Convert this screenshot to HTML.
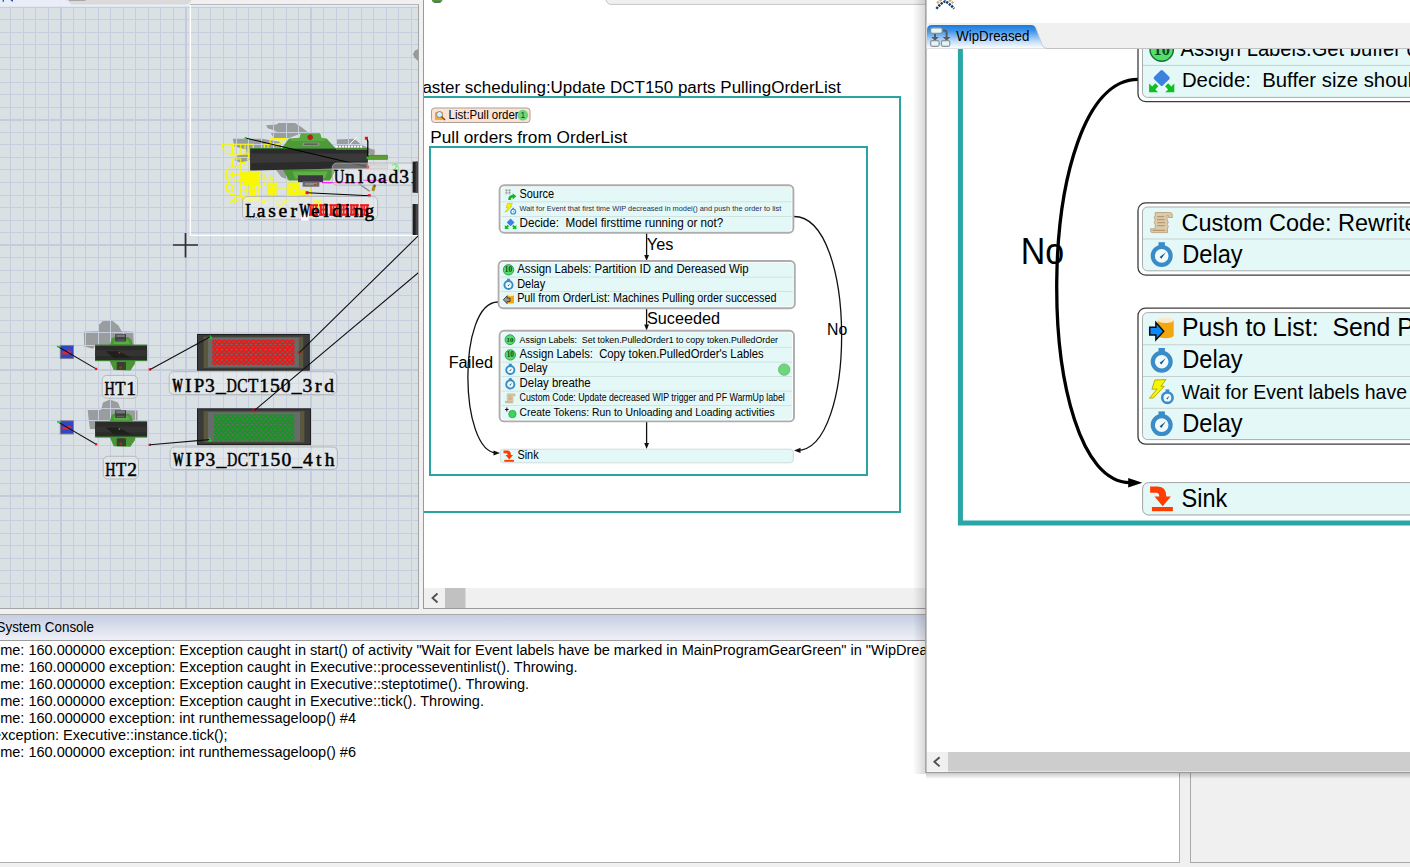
<!DOCTYPE html>
<html lang="en">
<head>
<meta charset="utf-8">
<title>FlexSim - Process Flow</title>
<style>
html,body{margin:0;padding:0;}
body{width:1410px;height:867px;position:relative;overflow:hidden;background:#f0f0f0;font-family:"Liberation Sans",sans-serif;}
svg{position:absolute;left:0;top:0;display:block;}
text{font-family:"Liberation Sans",sans-serif;fill:#000;white-space:pre;}
.lbl{font-family:"Liberation Serif",serif;font-size:19.5px;fill:#000;stroke:#000;stroke-width:0.5px;}
.t12{font-size:12px;}
.t15{font-size:16px;}
.con{font-size:15px;}
</style>
</head>
<body>
<svg width="1410" height="867" viewBox="0 0 1410 867">
<defs>
  <linearGradient id="tabG" x1="0" y1="0" x2="0" y2="1">
    <stop offset="0" stop-color="#1a7bdc"/><stop offset="0.25" stop-color="#3d93e6"/><stop offset="0.7" stop-color="#c3defa"/><stop offset="1" stop-color="#ffffff"/>
  </linearGradient>
  <linearGradient id="conG" x1="0" y1="0" x2="0" y2="1">
    <stop offset="0" stop-color="#c6cee4"/><stop offset="0.45" stop-color="#d9deec"/><stop offset="1" stop-color="#eef0f6"/>
  </linearGradient>
  <linearGradient id="shL" x1="0" y1="0" x2="1" y2="0">
    <stop offset="0" stop-color="#000" stop-opacity="0"/><stop offset="1" stop-color="#000" stop-opacity="0.16"/>
  </linearGradient>
  <linearGradient id="shB" x1="0" y1="0" x2="0" y2="1">
    <stop offset="0" stop-color="#000" stop-opacity="0.25"/><stop offset="1" stop-color="#000" stop-opacity="0"/>
  </linearGradient>
  <clipPath id="clip3d"><rect x="0" y="5" width="418" height="603"/></clipPath>
  <clipPath id="clipMid"><rect x="424" y="5" width="502" height="603"/></clipPath>
  <clipPath id="clipRW"><rect x="927" y="49" width="483" height="703"/></clipPath>
  <clipPath id="clipCon"><rect x="0" y="641" width="1179" height="221"/></clipPath>
  <!-- ===== icon symbols (24 unit box) ===== -->
  <symbol id="icoDelay" viewBox="0 0 24 24" overflow="visible">
    <rect x="8.8" y="-0.6" width="6.4" height="5" fill="#3a8cc9"/>
    <circle cx="12" cy="13.1" r="8.9" fill="#eefafb" stroke="#3a8cc9" stroke-width="4.2"/>
    <path d="M10,14.2 L16,9.6 L11.6,16z" fill="#1d507a"/>
  </symbol>
  <symbol id="icoAssign" viewBox="0 0 24 24" overflow="visible">
    <circle cx="12" cy="12" r="11.4" fill="#52dd6f" stroke="#156f2b" stroke-width="1.4"/>
    <text x="12" y="17.6" text-anchor="middle" font-size="16" font-weight="bold" style="font-family:'Liberation Serif',serif;fill:#0c4a1c">10</text>
  </symbol>
  <symbol id="icoDecide" viewBox="0 0 24 24" overflow="visible">
    <rect x="5.9" y="3.1" width="12.2" height="12.2" rx="1.6" ry="1.6" fill="#3b82e0" transform="rotate(45 12 9.2)"/>
    <path d="M-0.6,14.6 V23.4 H8.4 L5.6,20.6 L8.6,17.4 L5.6,14.4 L2.4,17.6z" fill="#0fbf1f"/>
    <path d="M24.6,14.6 V23.4 H15.6 L18.4,20.6 L15.4,17.4 L18.4,14.4 L21.6,17.6z" fill="#0fbf1f"/>
  </symbol>
  <symbol id="icoCode" viewBox="0 0 24 24" overflow="visible">
    <path d="M5.5,1.5 H20 Q22.6,1.5 22.6,4 V6.5 H18.8 V4.5 H17.4 V9 Q19.6,11 17.6,13.4 Q19.4,15.6 17.8,17.6 V21.6 H2.6 Q1,21.6 1,19.8 V17.8 H5.6 V13.6 Q3.6,11.4 5.6,9.2 Q3.6,6.6 5.5,4.4z" fill="#dccaa9" stroke="#b9a27f" stroke-width="0.9"/>
    <path d="M7.6,5.6 H14.6 M7.4,8.6 H15 M7.6,11.6 H15.4 M7.6,14.6 H15.2 M3,19.4 H15.6" stroke="#b39a74" stroke-width="1.1" fill="none"/>
  </symbol>
  <symbol id="icoPush" viewBox="0 0 24 24" overflow="visible">
    <path d="M8,3.4 V18.6 A8,2.7 0 0 0 24,18.6 V3.4z" fill="#f2a710"/>
    <ellipse cx="16" cy="3.4" rx="8" ry="2.7" fill="#fde8c6"/>
    <path d="M0,10.4 H6.2 V5.6 L14,14.3 L6.2,23 V18.2 H0z" fill="#0a8af8" stroke="#0b0b0b" stroke-width="1.5" stroke-linejoin="miter"/>
  </symbol>
  <symbol id="icoPull" viewBox="0 0 24 24" overflow="visible">
    <path d="M9.5,3.4 V19.4 A7.2,2.6 0 0 0 24,19.4 V3.4z" fill="#f2a710"/>
    <ellipse cx="16.7" cy="3.4" rx="7.2" ry="2.6" fill="#fde8c6"/>
    <path d="M15.4,10 H9 V5 L0.6,13.6 L9,22.2 V17.4 H15.4z" fill="#9a9a9a" stroke="#2a2a2a" stroke-width="1.7"/>
  </symbol>
  <symbol id="icoWait" viewBox="0 0 24 24" overflow="visible">
    <path d="M5.2,-0.4 L16.2,-0.8 L11.2,6 L14.6,5.8 L3.6,17.6 L-0.2,17.8 L7.4,8.6 L2.2,8.8z" fill="#f6f600" stroke="#b4ae0a" stroke-width="1"/>
    <rect x="15.8" y="9" width="3.8" height="3" fill="#3a8cc9"/>
    <circle cx="17.7" cy="17.3" r="5.2" fill="#eefafb" stroke="#3a8cc9" stroke-width="2.6"/>
    <path d="M16.6,18.2 L20,15.4 L17.6,19z" fill="#1d507a"/>
  </symbol>
  <symbol id="icoSink" viewBox="0 0 24 24" overflow="visible">
    <path d="M0.4,-0.4 H8 Q16.6,-0.4 16.6,9.6 H21.2 L13,19.4 L4.8,9.6 H9.6 Q9.6,6 6.4,6 H0.4z" fill="#ff3c00"/>
    <rect x="2.2" y="20.2" width="21" height="4.2" fill="#ff3c00"/>
  </symbol>
  <symbol id="icoSource" viewBox="0 0 24 24" overflow="visible">
    <path d="M0,3 H13 M0,8.6 H13 M2.6,0.6 V12.2 M9.4,0.6 V12.2" stroke="#9a9a9a" stroke-width="1.7" fill="none"/>
    <path d="M6.6,24 Q6.6,13.4 16.4,13.4 V9.4 L24.6,16.2 L16.4,23 V19 Q12.6,19 12.4,24z" fill="#14b52a"/>
  </symbol>
  <symbol id="icoCreate" viewBox="0 0 24 24" overflow="visible">
    <circle cx="16.6" cy="14.4" r="8.2" fill="#3ed45c" stroke="#1a8a34" stroke-width="1.2"/>
    <path d="M0.4,4.4 H8.4 M4.4,0 V8.8" stroke="#111" stroke-width="2.2" fill="none"/>
  </symbol>
  <pattern id="dotR" x="212.2" y="339.7" width="4.85" height="5.1" patternUnits="userSpaceOnUse">
    <circle cx="2.42" cy="2.3" r="1.75" fill="none" stroke="#ff0a0a" stroke-width="1.35"/>
    <rect x="1.8" y="4" width="1.3" height="1.2" fill="#ff0a0a"/>
  </pattern>
  <pattern id="dotG" x="214" y="414.2" width="4.73" height="5.3" patternUnits="userSpaceOnUse">
    <circle cx="2.36" cy="2.4" r="1.75" fill="none" stroke="#0a9a18" stroke-width="1.35"/>
    <rect x="1.7" y="4.2" width="1.3" height="1.2" fill="#0a9a18"/>
  </pattern>
</defs>

<!-- ===== base ===== -->
<rect x="0" y="0" width="1410" height="867" fill="#f0f0f0"/>

<!-- ===== 3D view ===== -->
<g id="view3d">
  <rect x="0" y="4" width="419" height="605" fill="#a3a3a3"/>
  <rect x="0" y="5" width="418" height="603" fill="#dae1e4"/>
  <g id="shadows3d" fill="#999d9d" clip-path="url(#clip3d)">
      <path d="M266.1,125.2 L276.8,124.4 L278.3,122.9 L295,122.9 L301,126.7 L308.6,132.8 L301,133.5 L288.9,138.1 L273.7,138.1 L270.7,132.8 L276.8,131.2 L267.7,128.2z"/>
      <path d="M232.8,138.8 L262,138.8 L281,142 L281,149 L253.2,149.5 L251,160 L240.3,162.4 L234.3,160 L237.3,155.5 L246.4,154 L246.4,149.5 L234.3,146.4z"/>
      <path d="M336,139.6 L354.2,138.8 L361.7,144.9 L374.6,150.2 L374.6,153.2 L367.8,154 L336,148z"/>
      <path d="M276,170 L287,170 L290,180.5 L281.3,177z"/>
    <path d="M83.8,331.7 L98,331.2 L99,324.8 L102.9,320.9 L112.7,320.9 L118.6,325.8 L121.6,331.2 L133.3,331.7 L133.8,344.9 L95.1,345.4 L93.1,348.8 L84.3,346.4z"/>
    <path d="M87.7,410 L101,410 L103,402.6 L110,399.6 L118,402.6 L121,410 L137.5,410.6 L137.5,423 L133,429 L90,429 L88.6,419z"/>
  </g>
  <path d="M10.5,5V608M23.5,5V608M35.5,5V608M48.5,5V608M73.5,5V608M85.5,5V608M98.5,5V608M110.5,5V608M123.5,5V608M135.5,5V608M148.5,5V608M160.5,5V608M173.5,5V608M198.5,5V608M210.5,5V608M223.5,5V608M236.5,5V608M248.5,5V608M261.5,5V608M273.5,5V608M286.5,5V608M298.5,5V608M323.5,5V608M336.5,5V608M348.5,5V608M361.5,5V608M373.5,5V608M386.5,5V608M398.5,5V608M411.5,5V608M0,7.5H418M0,19.5H418M0,32.5H418M0,44.5H418M0,57.5H418M0,69.5H418M0,82.5H418M0,94.5H418M0,107.5H418M0,132.5H418M0,144.5H418M0,157.5H418M0,169.5H418M0,182.5H418M0,195.5H418M0,207.5H418M0,220.5H418M0,232.5H418M0,257.5H418M0,270.5H418M0,282.5H418M0,295.5H418M0,307.5H418M0,320.5H418M0,332.5H418M0,345.5H418M0,357.5H418M0,383.5H418M0,395.5H418M0,408.5H418M0,420.5H418M0,433.5H418M0,445.5H418M0,458.5H418M0,470.5H418M0,483.5H418M0,508.5H418M0,520.5H418M0,533.5H418M0,545.5H418M0,558.5H418M0,570.5H418M0,583.5H418M0,596.5H418" stroke="#c6cdde" stroke-width="1" fill="none" shape-rendering="crispEdges"/>
  <path d="M61,5V608M186,5V608M311,5V608M0,120H418M0,245H418M0,370H418M0,496H418" stroke="#c4cbdc" stroke-width="2" fill="none" shape-rendering="crispEdges"/>
  <rect x="0" y="0" width="418" height="6.6" fill="#e8edf8"/>
  <rect x="190" y="0" width="229" height="4" fill="#f0f0f0"/>
  <rect x="190" y="4" width="229" height="0.9" fill="#b3b3b3"/>
  <path d="M65,0 Q68.4,0.4 69.4,2.6 Q70.4,4.4 73.6,4.4 H186 Q189,4.4 190.4,2 L191.6,0z" fill="#dadada"/>
  <rect x="69" y="0" width="16.5" height="0.9" fill="#a2a2a2"/>
  <rect x="2.6" y="0" width="1.4" height="1.8" fill="#2a5fc0"/>
  <path d="M10.4,0 h2.6 v1.8 q-1.6,-0.2 -2.6,-1.8z" fill="#2a5fc0"/>
</g>

<!-- ===== 3D view objects ===== -->
<g id="objs3d" clip-path="url(#clip3d)">
  <path d="M190.4,5 V235.3 H418" stroke="#ffffff" stroke-width="1.3" fill="none"/>
  <path d="M173,245 H198 M185.5,233 V257.5" stroke="#2f2f2f" stroke-width="1.7" fill="none"/>
  <path d="M418.5,48.8 L415,50.6 L413,54 L414.4,57.4 L418.5,61.4z" fill="#959a9a"/>

  <!-- connection lines to WIP racks -->

  <!-- ===== laser welding machine ===== -->
  <g id="laser">
    <!-- yellow wireframe -->
    <g fill="none" stroke="#f8f800" stroke-width="1.05">
      <path d="M222.1,144.2 H232.5 V154.1 H229.2 L222.7,148.1z"/>
      <rect x="232.5" y="144.2" width="20.8" height="9.9"/>
      <path d="M235.3,144.2 V154.1 M240.7,144.2 V154.1 M245.1,144.2 V154.1 M247.9,144.2 V154.1"/>
      <path d="M270,141.4 Q270,138.4 273,138.4 H286 L279,144 H273 Q270,144 270,141.4z M277,138.4 L283,144"/>
      <path d="M264.3,148 V145.6 Q264.3,144.2 266,144.2 H279.6 M268,144.2 V148"/>
      <path d="M250.1,148.6 V171.6 M247,152 Q250,156 247,160 M247.6,161 H250.1 V166 H247.6z"/>
      <rect x="232.5" y="159" width="8.2" height="8.2"/>
      <path d="M240.7,162.4 H245 M243,165 H245.6"/>
      <path d="M229,167.2 L225.4,171.4 V178 L230.2,181.5 L225.4,184.8 L230.2,194.6 H234.6"/>
      <path d="M229,167.2 H240.7 V195.7 M233.6,171.4 V194.6 M229,174.8 H240.7 M229,185.4 H240.7 M233.6,180 H240.7"/>
      <circle cx="229.6" cy="174.6" r="3.4"/>
      <circle cx="229.6" cy="188.2" r="3.4"/>
      <path d="M258.8,172.7 Q265.6,173 265.6,180 Q265.4,186 259,186.6"/>
      <path d="M240.7,172.2 H258.8 V195.7 H240.7 M246,172.2 V195.7 M252,184 V195.7 M240.7,184 H258.8 M240.7,190 H258.8"/>
      <path d="M271.4,172.7 V183 M269.6,178.2 l1.8,-1.8 l1.8,1.8 l-1.8,1.8z"/>
      <rect x="267.4" y="183.1" width="9.5" height="11"/>
      <path d="M269.4,194 L271.4,197 L273.4,194"/>
      <rect x="287.3" y="182" width="11" height="13.7"/>
      <path d="M298.3,190.8 H305.9 V194.1 H298.3"/>
      <path d="M305.9,187 H309 Q312.4,192 309,198 H305.9"/>
      <path d="M230.3,201.2 H305.9"/>
      <path d="M230.3,203.4 L235.8,196.8 H242.4 L241.3,203.4z M234,203.4 L237.4,198.6"/>
      <path d="M247.6,197.4 L250.4,201.8 L253.6,197.4 M276.4,201.4 L280,207.6 L284.6,201.4"/>
      <circle cx="263.6" cy="201.2" r="1.5"/><circle cx="285" cy="201.2" r="1.5"/>
      <path d="M258.8,178 H267.4 M276.9,189 H287.3"/>
    </g>
    <g fill="#f8f800">
      <path d="M243,172.4 H258.6 V185 H255 V195.4 H250 V185 H243z"/>
      <rect x="241" y="174" width="3" height="8"/>
      <rect x="268.2" y="184" width="7.9" height="9.2"/>
      <rect x="288.2" y="183" width="9.2" height="11.8"/>
      <rect x="298.3" y="191.4" width="7" height="2.2"/>
      <rect x="313.8" y="199.2" width="7.2" height="9.4" opacity="0.85"/>
    </g>
    <g fill="#dae1e4">
      <rect x="270" y="186.4" width="1.6" height="1.6"/><rect x="273" y="186.4" width="1.6" height="1.6"/>
      <rect x="290.4" y="186" width="1.8" height="2"/><rect x="294" y="189.6" width="1.8" height="2"/>
      <rect x="252.6" y="187" width="1.6" height="2.4"/>
    </g>
    <rect x="243.5" y="195.9" width="16.4" height="5" fill="#f4f46a" opacity="0.75"/>
    <!-- green body -->
    <path d="M281.3,148.7 L288.9,138.8 L299.5,138.1 L301,133.5 L320,133.5 L321.5,138.1 L326.8,138.8 L336,148.7z" fill="#4e9a38"/>
    <path d="M288.9,138.8 L299.5,138.1 L301,133.5 L320,133.5 L321.5,138.1 L326.8,138.8 L324,141 H292z" fill="#5aaa42"/>
    <path d="M282.8,169.2 L288.9,180.6 L329.9,180.6 L336,169.2z" fill="#4b9536"/>
    <path d="M292.6,171.4 H327.6 L325,178.4 H295z" fill="#5fae46"/>
    <circle cx="310.2" cy="137.3" r="2.7" fill="#b3231f"/>
    <rect x="302.6" y="142.6" width="16.7" height="3.2" fill="#8f9492"/>
    <rect x="304.2" y="143.4" width="13.4" height="1.6" fill="#5d605f"/>
    <!-- conveyor -->
    <path d="M250.1,148.6 H367.8 V168.6 L330,168.8 L250.1,170.6z" fill="#2b2b2b"/>
    <path d="M250.1,153.5 H367.8 V161 L250.1,163z" fill="#393939"/>
    <path d="M250.1,148.6 H336" stroke="#2f7a2f" stroke-width="0.9" fill="none"/>
    <rect x="336" y="148.2" width="32" height="1.6" fill="#4a9436"/>
    <!-- bottom dark box -->
    <rect x="298" y="175.3" width="25" height="6.8" fill="#37373d"/>
    <rect x="302.6" y="181.3" width="16.7" height="5.4" fill="#6a6a70"/>
    <rect x="305" y="183" width="12" height="2.2" fill="#8d8d92"/>
    <rect x="314" y="184" width="2.4" height="1.4" fill="#c0392b"/>
    <!-- rods -->
    <rect x="369.7" y="149.5" width="4.8" height="6" fill="#9c9c9c"/>
    <rect x="372" y="168.8" width="13" height="2" fill="#d6d6d6"/>
    <rect x="367.8" y="155.2" width="19.7" height="4.1" fill="#5c9c32" stroke="#3f7422" stroke-width="0.6"/>
    <rect x="367.8" y="164.9" width="19.7" height="4" fill="#cfcfcf" stroke="#a5a5a5" stroke-width="0.6"/>
    <!-- white ticks -->
    <path d="M349.6,144.6 L356.6,137.2" stroke="#ffffff" stroke-width="1"/>
    <path d="M336,146.6 H362" stroke="#ffffff" stroke-width="1.6" stroke-dasharray="2 1"/>
    <!-- connector lines -->
    <path d="M245.7,138.1 L367.8,166.9" stroke="#000" stroke-width="1"/>
    <path d="M367.8,157.8 V141 L366.6,138.4" stroke="#000" stroke-width="1.2" fill="none"/>
    <rect x="244.6" y="137" width="2.2" height="2.2" fill="#22cc22"/>
    <rect x="364.8" y="136.8" width="3.2" height="2.8" fill="#ee1111"/>
    <rect x="366.4" y="165.6" width="2.8" height="2.8" fill="#ee1111"/>
    <rect x="366.6" y="156.6" width="2.2" height="2.2" fill="#22cc22"/>
    <path d="M392,165.4 q3.6,-3 5.8,0.6 q2,4 -1.6,6.2 M394.4,164 l2.4,3 l-3.4,2.6 l4,1.4 M395.6,163.4 v3" stroke="#22e022" stroke-width="1.1" fill="none" stroke-dasharray="1.6 0.9"/>
    <!-- magenta line -->
    <path d="M322,182.6 H363 M363,180.4 H387.6" stroke="#ff1cff" stroke-width="1.1" fill="none"/>
    <path d="M358.5,183.4 L369.7,191.3" stroke="#8d8d8d" stroke-width="1.3"/>
    <path d="M373,184.8 l3,1 l-1.6,5.4 l-3,-0.6z" fill="#a58a1e"/><circle cx="374.6" cy="185.4" r="1.1" fill="#3a2a12"/>
    <path d="M307.1,192.7 L369.3,195.7" stroke="#000" stroke-width="1.1"/>
    <rect x="305.6" y="191.2" width="3" height="3" fill="#ee1111"/>
    <rect x="367.8" y="194.2" width="3" height="3" fill="#ee1111"/>
    <rect x="332.2" y="163.1" width="95" height="22" rx="4.5" fill="#f4f4f4" fill-opacity="0.34" stroke="#a9acad" stroke-opacity="0.85" stroke-width="0.9"/>
    <rect x="242.6" y="196.5" width="135.1" height="22.8" rx="4.5" fill="#f4f4f4" fill-opacity="0.34" stroke="#a9acad" stroke-opacity="0.85" stroke-width="0.9"/>
    <!-- red garble under label -->
    <g fill="#ee1c1c">
      <rect x="309.5" y="204.5" width="2.2" height="11"/>
      <rect x="315.2" y="204.5" width="2.2" height="11"/>
      <rect x="309.0" y="204.2" width="9" height="2"/>
      <rect x="310.0" y="208.6" width="7.5" height="1.8"/>
      <rect x="309.0" y="213.6" width="9" height="2.2"/>
      <rect x="312.4" y="206.0" width="1.6" height="8"/>
      <rect x="319.7" y="204.5" width="2.2" height="11"/>
      <rect x="325.4" y="204.5" width="2.2" height="11"/>
      <rect x="319.2" y="204.2" width="9" height="2"/>
      <rect x="320.2" y="208.6" width="7.5" height="1.8"/>
      <rect x="319.2" y="213.6" width="9" height="2.2"/>
      <rect x="322.6" y="206.0" width="1.6" height="8"/>
      <rect x="329.9" y="204.5" width="2.2" height="11"/>
      <rect x="335.6" y="204.5" width="2.2" height="11"/>
      <rect x="329.4" y="204.2" width="9" height="2"/>
      <rect x="330.4" y="208.6" width="7.5" height="1.8"/>
      <rect x="329.4" y="213.6" width="9" height="2.2"/>
      <rect x="332.8" y="206.0" width="1.6" height="8"/>
      <rect x="340.1" y="204.5" width="2.2" height="11"/>
      <rect x="345.8" y="204.5" width="2.2" height="11"/>
      <rect x="339.6" y="204.2" width="9" height="2"/>
      <rect x="340.6" y="208.6" width="7.5" height="1.8"/>
      <rect x="339.6" y="213.6" width="9" height="2.2"/>
      <rect x="343.0" y="206.0" width="1.6" height="8"/>
      <rect x="350.3" y="204.5" width="2.2" height="11"/>
      <rect x="356.0" y="204.5" width="2.2" height="11"/>
      <rect x="349.8" y="204.2" width="9" height="2"/>
      <rect x="350.8" y="208.6" width="7.5" height="1.8"/>
      <rect x="349.8" y="213.6" width="9" height="2.2"/>
      <rect x="353.2" y="206.0" width="1.6" height="8"/>
      <rect x="360.5" y="204.5" width="2.2" height="11"/>
      <rect x="366.2" y="204.5" width="2.2" height="11"/>
      <rect x="360.0" y="204.2" width="9" height="2"/>
      <rect x="361.0" y="208.6" width="7.5" height="1.8"/>
      <rect x="360.0" y="213.6" width="9" height="2.2"/>
      <rect x="363.4" y="206.0" width="1.6" height="8"/>
    </g>
    <rect x="301" y="207" width="7.6" height="13.6" fill="#ffffff"/>
    <path d="M249.5,217.6 H260" stroke="#22cc22" stroke-width="1" stroke-dasharray="1.5 1.5"/>
    <!-- label plates -->
    <text class="lbl" y="182.8"><tspan x="334.0" textLength="10.3" lengthAdjust="spacingAndGlyphs">U</tspan><tspan x="345.1">n</tspan><tspan x="358.1">l</tspan><tspan x="366.7">o</tspan><tspan x="378.1">a</tspan><tspan x="388.4">d</tspan><tspan x="399.2">3</tspan><tspan x="410.1">1</tspan></text>
    <text class="lbl" y="217"><tspan x="245.2" textLength="10.3" lengthAdjust="spacingAndGlyphs">L</tspan><tspan x="256.8">a</tspan><tspan x="268.2">s</tspan><tspan x="278.5">e</tspan><tspan x="290.4">r</tspan><tspan x="299.3" font-weight="bold" textLength="10.6" lengthAdjust="spacingAndGlyphs">W</tspan><tspan x="311.0">e</tspan><tspan x="323.4">l</tspan><tspan x="332.1">d</tspan><tspan x="345.1">i</tspan><tspan x="353.7">n</tspan><tspan x="364.6">g</tspan></text>
    <!-- black bars at right edge -->
    <rect x="412.6" y="161.6" width="5.4" height="31.1" fill="#1f1f1f"/>
    <rect x="415.6" y="161.6" width="2.4" height="31.1" fill="#484848"/>
    <rect x="412.6" y="204" width="5.4" height="31" fill="#1f1f1f"/>
    <rect x="415.6" y="204" width="2.4" height="31" fill="#484848"/>
  </g>
  <!-- ===== HT machines ===== -->
  <g id="ht1">
    <path d="M109.8,344.9 L111.8,338.5 L114.7,337.1 L128.4,337.1 L131.4,339.5 L132.8,344.9z" fill="#4c9838"/>
    <path d="M113.4,344.0 L114.6,340.0 L128,340.0 L129.6,344.0z" fill="#5cab44"/>
    <path d="M109.8,360.9 L113.7,369.9 L130.4,370.4 L134.8,364.0 L135.3,360.9z" fill="#4b9536"/>
    <rect x="115.2" y="334.1" width="10.8" height="7.4" fill="#3b3b40"/>
    <rect x="116.2" y="334.6" width="8.8" height="2.6" fill="#77777a"/>
    <rect x="116.6" y="339.4" width="8" height="1.3" fill="#5e5e64"/>
    <rect x="95.1" y="344.9" width="52" height="16" fill="#2b2b2a"/>
    <rect x="95.1" y="350.0" width="52" height="6" fill="#333332"/>
    <rect x="95.1" y="344.6" width="52" height="1.1" fill="#3f8f2f"/>
    <rect x="95.1" y="360.2" width="52" height="1" fill="#3f8f2f"/>
    <path d="M105.9,351.3 L118.6,351.3 L131.4,358.1 L113.7,358.1z" fill="#1f1f1e"/>
    <rect x="116.7" y="362.1" width="9.3" height="7.8" fill="#2c4a25"/>
    <rect x="118.6" y="362.1" width="5" height="3.6" fill="#3a3a3e"/>
    <circle cx="120.6" cy="367.5" r="1.3" fill="#c81e1e"/>
    <circle cx="119.4" cy="352.7" r="0.9" fill="#dd2222"/>
    <rect x="60.3" y="345.4" width="13.2" height="13.2" fill="#3046c6" stroke="#7e8286" stroke-width="0.9"/>
    <path d="M62.3,351.3 L68.1,351.3 L68.1,349.3 L72.1,351.8 L68.6,354.4 L62.3,354.4z" fill="#d8283a"/>
    <path d="M57.4,346.2 L96.1,368.9" stroke="#111" stroke-width="1.05"/>
    <rect x="57.6" y="345.8" width="2.2" height="2" fill="#22dd22"/>
    <rect x="95" y="367.8" width="2.3" height="2.2" fill="#ee1111"/>
    <rect x="148.6" y="368.3" width="2.4" height="2.3" fill="#ee1111"/>
  </g>
  <g id="ht2">
    <path d="M109.8,421.2 L111.8,414.8 L114.7,413.4 L128.4,413.4 L131.4,415.8 L132.8,421.2z" fill="#4c9838"/>
    <path d="M113.4,420.3 L114.6,416.3 L128,416.3 L129.6,420.3z" fill="#5cab44"/>
    <path d="M109.8,437.2 L113.7,446.2 L130.4,446.7 L134.8,440.3 L135.3,437.2z" fill="#4b9536"/>
    <rect x="115.2" y="410.4" width="10.8" height="7.4" fill="#3b3b40"/>
    <rect x="116.2" y="410.9" width="8.8" height="2.6" fill="#77777a"/>
    <rect x="116.6" y="415.7" width="8" height="1.3" fill="#5e5e64"/>
    <rect x="95.1" y="421.2" width="52" height="16" fill="#2b2b2a"/>
    <rect x="95.1" y="426.3" width="52" height="6" fill="#333332"/>
    <rect x="95.1" y="420.9" width="52" height="1.1" fill="#3f8f2f"/>
    <rect x="95.1" y="436.5" width="52" height="1" fill="#3f8f2f"/>
    <path d="M105.9,427.6 L118.6,427.6 L131.4,434.4 L113.7,434.4z" fill="#1f1f1e"/>
    <rect x="116.7" y="438.4" width="9.3" height="7.8" fill="#2c4a25"/>
    <rect x="118.6" y="438.4" width="5" height="3.6" fill="#3a3a3e"/>
    <circle cx="120.6" cy="443.8" r="1.3" fill="#c81e1e"/>
    <circle cx="119.4" cy="429.0" r="0.9" fill="#22aa22"/>
    <rect x="60.3" y="420.8" width="13.2" height="13.2" fill="#3046c6" stroke="#7e8286" stroke-width="0.9"/>
    <path d="M62.3,426.7 L68.1,426.7 L68.1,424.7 L72.1,427.2 L68.6,429.8 L62.3,429.8z" fill="#d8283a"/>
    <path d="M57.4,421.6 L96.1,444.3" stroke="#111" stroke-width="1.05"/>
    <rect x="57.6" y="421.2" width="2.2" height="2" fill="#22dd22"/>
    <rect x="95" y="443.2" width="2.3" height="2.2" fill="#ee1111"/>
    <rect x="148.6" y="443.7" width="2.4" height="2.3" fill="#ee1111"/>
  </g>
  <!-- ===== WIP racks ===== -->
  <g id="racks">
    <rect x="197" y="333.9" width="112.8" height="36.8" fill="#1f1f1f"/>
    <rect x="198" y="334.9" width="110.8" height="34.8" fill="#3a3a38"/>
    <rect x="203.6" y="336.7" width="99.6" height="31.4" fill="#5b573f"/>
    <rect x="208" y="337.7" width="90.8" height="29.4" fill="#676c6a"/>
    <rect x="212.2" y="339.7" width="82.40000000000003" height="25.5" fill="url(#dotR)"/>
    <rect x="197" y="408.3" width="114" height="36.8" fill="#1f1f1f"/>
    <rect x="198" y="409.3" width="112" height="34.8" fill="#3a3a38"/>
    <rect x="203.6" y="411.1" width="100.8" height="31.4" fill="#5b573f"/>
    <rect x="208" y="412.1" width="92" height="29.4" fill="#676c6a"/>
    <rect x="214" y="414.2" width="80.39999999999998" height="26.69999999999999" fill="url(#dotG)"/>
    <path d="M208,338.6 l2.2,-3.6 l2.2,3.6z" fill="#22dd22"/>
    <path d="M207.4,441.4 l2.2,-3.8 l2.4,3.8z" fill="#22dd22"/>
    <circle cx="299.3" cy="352.7" r="1.5" fill="none" stroke="#ee1111" stroke-width="1"/>
    <circle cx="254.5" cy="410.4" r="1.5" fill="none" stroke="#ee1111" stroke-width="1"/>
  </g>
  <!-- labels -->
  <g id="lbls3d">
    <rect x="102.2" y="375.4" width="35.3" height="22.8" rx="4.5" fill="#f4f4f4" fill-opacity="0.34" stroke="#a9acad" stroke-opacity="0.85" stroke-width="0.9"/>
    <rect x="103.3" y="456.3" width="35.2" height="22.7" rx="4.5" fill="#f4f4f4" fill-opacity="0.34" stroke="#a9acad" stroke-opacity="0.85" stroke-width="0.9"/>
    <rect x="169.2" y="371.7" width="167.6" height="22.7" rx="4.5" fill="#f4f4f4" fill-opacity="0.34" stroke="#a9acad" stroke-opacity="0.85" stroke-width="0.9"/>
    <rect x="170.1" y="447" width="167.4" height="22.4" rx="4.5" fill="#f4f4f4" fill-opacity="0.34" stroke="#a9acad" stroke-opacity="0.85" stroke-width="0.9"/>
    <text class="lbl" y="395"><tspan x="104.4" textLength="10.3" lengthAdjust="spacingAndGlyphs">H</tspan><tspan x="115.2" textLength="10.3" lengthAdjust="spacingAndGlyphs">T</tspan><tspan x="126.3">1</tspan></text>
    <text class="lbl" y="476"><tspan x="105.3" textLength="10.3" lengthAdjust="spacingAndGlyphs">H</tspan><tspan x="116.1" textLength="10.3" lengthAdjust="spacingAndGlyphs">T</tspan><tspan x="127.2">2</tspan></text>
    <text class="lbl" y="391.6"><tspan x="172.3" font-weight="bold" textLength="10.6" lengthAdjust="spacingAndGlyphs">W</tspan><tspan x="185.0">I</tspan><tspan x="193.9" textLength="10.3" lengthAdjust="spacingAndGlyphs">P</tspan><tspan x="205.0">3</tspan><tspan x="215.9">_</tspan><tspan x="226.4" textLength="10.3" lengthAdjust="spacingAndGlyphs">D</tspan><tspan x="237.2" textLength="10.3" lengthAdjust="spacingAndGlyphs">C</tspan><tspan x="248.1" textLength="10.3" lengthAdjust="spacingAndGlyphs">T</tspan><tspan x="259.2">1</tspan><tspan x="270.0">5</tspan><tspan x="280.8">0</tspan><tspan x="291.7">_</tspan><tspan x="302.5">3</tspan><tspan x="315.0">r</tspan><tspan x="324.2">d</tspan></text>
    <text class="lbl" y="466.3"><tspan x="172.9" font-weight="bold" textLength="10.6" lengthAdjust="spacingAndGlyphs">W</tspan><tspan x="185.6">I</tspan><tspan x="194.5" textLength="10.3" lengthAdjust="spacingAndGlyphs">P</tspan><tspan x="205.6">3</tspan><tspan x="216.5">_</tspan><tspan x="227.0" textLength="10.3" lengthAdjust="spacingAndGlyphs">D</tspan><tspan x="237.8" textLength="10.3" lengthAdjust="spacingAndGlyphs">C</tspan><tspan x="248.7" textLength="10.3" lengthAdjust="spacingAndGlyphs">T</tspan><tspan x="259.8">1</tspan><tspan x="270.6">5</tspan><tspan x="281.4">0</tspan><tspan x="292.3">_</tspan><tspan x="303.1">4</tspan><tspan x="316.1">t</tspan><tspan x="324.8">h</tspan></text>
  </g>
  <!-- redraw the rack connection line over the label -->
  <path d="M418.5,235.6 L299.3,352.7 M418.5,272.6 L254.5,410.4 M150.2,369.6 L210.2,336.8 M150.2,444.8 L209.4,439.6" stroke="#111" stroke-width="1.1" fill="none"/>
</g>

<!-- ===== middle process-flow panel ===== -->
<g id="midpanel">
  <rect x="423" y="0" width="504" height="609" fill="#9a9a9a"/>
  <rect x="424" y="0" width="502" height="608" fill="#ffffff"/>
  <path d="M606,0 Q607.4,4.4 611,4.4 H926 V0z" fill="#f0f0f0"/>
  <path d="M606,0 Q607.4,4.4 611,4.4 H926" fill="none" stroke="#b9b9b9" stroke-width="0.8"/>
  <rect x="432" y="0" width="10.2" height="1.7" fill="#4e9a38"/>
  <rect x="433.6" y="1.5" width="7" height="1.2" fill="#2d3a2a"/>
</g>

<!-- ===== middle panel content ===== -->
<g id="midcontent" clip-path="url(#clipMid)">
  <!-- outer container -->
  <rect x="400" y="97" width="500" height="415" fill="none" stroke="#2aa3a3" stroke-width="2"/>
  <text class="t15" x="422.4" y="92.7" textLength="418.6" lengthAdjust="spacingAndGlyphs">aster scheduling:Update DCT150 parts PullingOrderList</text>
  <!-- list badge -->
  <rect x="431.5" y="108" width="98.5" height="14.5" rx="3" ry="3" fill="#fbe2d2" stroke="#a99f97" stroke-width="1"/>
  <g id="icoList">
    <rect x="435" y="112" width="8" height="8" rx="1" fill="#f2a93b"/>
    <circle cx="439.5" cy="114.5" r="3" fill="#dfefff" stroke="#7a8796" stroke-width="1"/>
    <line x1="441.7" y1="116.8" x2="445" y2="120" stroke="#7a4a1c" stroke-width="1.6"/>
  </g>
  <text class="t12" x="448.6" y="119" textLength="70" lengthAdjust="spacingAndGlyphs">List:Pull order</text>
  <circle cx="522.8" cy="115.2" r="5.4" fill="#6dd67c"/>
  <text x="522.8" y="118.2" font-size="8.5" text-anchor="middle" style="fill:#0d4a1a">1</text>
  <!-- inner container -->
  <text class="t15" x="430.3" y="142.5" textLength="197" lengthAdjust="spacingAndGlyphs">Pull orders from OrderList</text>
  <rect x="430" y="147" width="437" height="328" fill="none" stroke="#2aa3a3" stroke-width="2"/>

  <!-- connectors -->
  <g fill="none" stroke="#111" stroke-width="1.3">
    <path d="M646.6,233 V258"/>
    <path d="M646.6,309 V328"/>
    <path d="M646.6,422 V446"/>
    <path d="M794,216.5 C857,216.5 857,450.4 797,450.4"/>
    <path d="M498,302 C457,302 459,453 497,453"/>
  </g>
  <g fill="#111">
    <path d="M646.6,261 l-2.4,-6 h4.8z"/>
    <path d="M646.6,330.5 l-2.4,-6 h4.8z"/>
    <path d="M646.6,449 l-2.4,-6 h4.8z"/>
    <path d="M794,450.4 l6.5,-2.6 v5.2z"/>
    <path d="M500,453 l-6.5,-2.6 v5.2z"/>
  </g>
  <text class="t15" x="646.8" y="250.4" textLength="26.6" lengthAdjust="spacingAndGlyphs">Yes</text>
  <text class="t15" x="647" y="324" textLength="73" lengthAdjust="spacingAndGlyphs">Suceeded</text>
  <text class="t15" x="827" y="335.3" textLength="20.2" lengthAdjust="spacingAndGlyphs">No</text>
  <text class="t15" x="448.7" y="367.7" textLength="44.3" lengthAdjust="spacingAndGlyphs">Failed</text>

  <!-- block 1 -->
  <rect x="499.6" y="185.3" width="293.8" height="47.4" rx="4.5" ry="4.5" fill="#ffffff" stroke="#adadad" stroke-width="1.9"/>
  <rect x="501.4" y="187.1" width="290.2" height="43.8" rx="3" ry="3" fill="#e4f8f8"/>
  <path d="M501.4,201.8 H791.6 M501.4,216.5 H791.6" stroke="#cfe3e3" stroke-width="1" fill="none"/>
  <text class="t12" x="519.4" y="197.7" textLength="34.8" lengthAdjust="spacingAndGlyphs">Source</text>
  <text x="519.5" y="211.3" font-size="7.7" style="fill:#1f2c48" textLength="261.7" lengthAdjust="spacingAndGlyphs">Wait for Event that first time WIP decreased in model() and push the order to list</text>
  <text class="t12" x="519.5" y="226.8" textLength="203.8" lengthAdjust="spacingAndGlyphs">Decide:  Model firsttime running or not?</text>

  <!-- block 2 -->
  <rect x="498.6" y="261" width="296.2" height="47.2" rx="4.5" ry="4.5" fill="#ffffff" stroke="#adadad" stroke-width="1.9"/>
  <rect x="500.4" y="262.8" width="292.6" height="43.6" rx="3" ry="3" fill="#e4f8f8"/>
  <path d="M500.4,277.1 H793 M500.4,291.5 H793" stroke="#cfe3e3" stroke-width="1" fill="none"/>
  <text class="t12" x="517.2" y="273" textLength="231.5" lengthAdjust="spacingAndGlyphs">Assign Labels: Partition ID and Dereased Wip</text>
  <text class="t12" x="517.2" y="287.8" textLength="28" lengthAdjust="spacingAndGlyphs">Delay</text>
  <text class="t12" x="517.2" y="302.1" textLength="259.2" lengthAdjust="spacingAndGlyphs">Pull from OrderList: Machines Pulling order successed</text>

  <!-- block 3 -->
  <rect x="499.6" y="330.8" width="294.4" height="90.6" rx="4.5" ry="4.5" fill="#ffffff" stroke="#adadad" stroke-width="1.9"/>
  <rect x="501.4" y="332.6" width="290.8" height="87" rx="3" ry="3" fill="#e4f8f8"/>
  <path d="M501.4,347.4 H792.2 M501.4,362.1 H792.2 M501.4,376.5 H792.2 M501.4,391.1 H792.2 M501.4,405.5 H792.2" stroke="#cfe3e3" stroke-width="1" fill="none"/>
  <text x="519.6" y="342.8" font-size="9.6" textLength="258.4" lengthAdjust="spacingAndGlyphs">Assign Labels:  Set token.PulledOrder1 to copy token.PulledOrder</text>
  <text class="t12" x="519.6" y="357.7" textLength="244" lengthAdjust="spacingAndGlyphs">Assign Labels:  Copy token.PulledOrder's Lables</text>
  <text class="t12" x="519.6" y="372.4" textLength="28" lengthAdjust="spacingAndGlyphs">Delay</text>
  <text class="t12" x="519.6" y="386.8" textLength="71" lengthAdjust="spacingAndGlyphs">Delay breathe</text>
  <text x="519.6" y="401.1" font-size="10" textLength="265.2" lengthAdjust="spacingAndGlyphs">Custom Code: Update decreased WIP trigger and PF WarmUp label</text>
  <text x="519.6" y="415.5" font-size="10.8" textLength="255.2" lengthAdjust="spacingAndGlyphs">Create Tokens: Run to Unloading and Loading activities</text>
  <circle cx="784.2" cy="369.6" r="5.7" fill="#6fd67a" stroke="#58b864" stroke-width="0.8"/>

  <!-- sink -->
  <rect x="500.3" y="449.2" width="293" height="13.6" rx="3" ry="3" fill="#e4f8f8" stroke="#c9d4d4" stroke-width="0.8"/>
  <text class="t12" x="517.4" y="458.6" textLength="21.2" lengthAdjust="spacingAndGlyphs">Sink</text>

  <!-- scrollbar -->
  <rect x="424" y="588" width="502" height="20" fill="#f0f0f0"/>
  <rect x="445" y="588" width="20.5" height="20" fill="#c1c1c1"/>
  <path d="M437.5,593.5 L432.5,598 L437.5,602.5" fill="none" stroke="#505050" stroke-width="1.8"/>
</g>

  <!-- mid panel icons -->
  <g id="midicons" clip-path="url(#clipMid)">
    <use href="#icoSource" x="505.1" y="188.9" width="11" height="11"/>
    <use href="#icoWait" x="505.1" y="203.7" width="11" height="11"/>
    <use href="#icoDecide" x="505.1" y="218.2" width="11" height="11"/>
    <use href="#icoAssign" x="503" y="264.3" width="11" height="11"/>
    <use href="#icoDelay" x="503" y="279" width="11" height="11"/>
    <use href="#icoPull" x="503" y="293.5" width="11" height="11"/>
    <use href="#icoAssign" x="504.8" y="334.5" width="10.4" height="10.4"/>
    <use href="#icoAssign" x="504.8" y="349.4" width="11" height="11"/>
    <use href="#icoDelay" x="504.8" y="364" width="11" height="11"/>
    <use href="#icoDelay" x="504.8" y="378.4" width="11" height="11"/>
    <use href="#icoCode" x="504.8" y="393" width="11" height="11"/>
    <use href="#icoCreate" x="504.8" y="407.5" width="11" height="11"/>
    <use href="#icoSink" x="503.3" y="450.6" width="11" height="11"/>
  </g>

<!-- ===== console ===== -->
<g id="console">
  <rect x="0" y="614" width="1180" height="1" fill="#a9a9a9"/>
  <rect x="0" y="615" width="1179" height="25" fill="url(#conG)"/>
  <rect x="0" y="640" width="1179" height="1" fill="#9c9c9c"/>
  <rect x="0" y="641" width="1179" height="221" fill="#ffffff"/>
  <rect x="1179" y="614" width="1" height="249" fill="#b0b0b0"/>
  <rect x="0" y="862" width="1180" height="1" fill="#b0b0b0"/>
</g>

<!-- ===== console text ===== -->
<g id="context" clip-path="url(#clipCon)"><g transform="translate(-7.1,0) scale(0.9687,1)">
  <text class="con" x="0" y="655">time: 160.000000 exception: Exception caught in start() of activity "Wait for Event labels have be marked in MainProgramGearGreen" in "WipDreased"</text>
  <text class="con" x="0" y="672">time: 160.000000 exception: Exception caught in Executive::processeventinlist(). Throwing.</text>
  <text class="con" x="0" y="689">time: 160.000000 exception: Exception caught in Executive::steptotime(). Throwing.</text>
  <text class="con" x="0" y="706">time: 160.000000 exception: Exception caught in Executive::tick(). Throwing.</text>
  <text class="con" x="0" y="723">time: 160.000000 exception: int runthemessageloop() #4</text>
  <text class="con" x="0" y="740">exception: Executive::instance.tick();</text>
  <text class="con" x="0" y="757">time: 160.000000 exception: int runthemessageloop() #6</text>
</g>
</g>
<text x="-3.5" y="631.8" font-size="14.4" textLength="97.5" lengthAdjust="spacingAndGlyphs">System Console</text>

<!-- ===== bottom-right panel ===== -->
<g id="brpanel">
  <rect x="1190" y="640" width="220" height="223" fill="#a8a8a8"/>
  <rect x="1191" y="640" width="219" height="222" fill="#f0f0f0"/>
</g>

<!-- ===== right floating window ===== -->
<g id="rwin">
  <rect x="913" y="0" width="13" height="774" fill="url(#shL)"/>
  <rect x="926" y="772" width="484" height="7" fill="url(#shB)"/>
  <rect x="925.2" y="0" width="485" height="773" fill="#9a9a9a"/>
  <rect x="926.6" y="0" width="483.4" height="772" fill="#ffffff"/>
  <rect x="926.6" y="23" width="483.4" height="26" fill="#f0f0f0"/>
  <rect x="927" y="48" width="483" height="1" fill="#c2c2c2"/>
</g>
<!-- ===== right window content ===== -->
<g id="rwtab">
  <path d="M927,48.5 V30 Q927,25 932,25 H1031 Q1034.6,25 1036,28.4 L1042,44.6 Q1043.4,48.5 1047,48.5z" fill="url(#tabG)"/>
  <path d="M1036,28.4 L1042,44.6 Q1043.4,48.5 1047,48.5" fill="none" stroke="#c4c4c4" stroke-width="0.8"/>
  <!-- tab icon -->
  <path d="M935,33.4 V38 M942.2,30.6 H944.2 Q946.6,30.6 946.6,33 V38" fill="none" stroke="#565b5e" stroke-width="2"/>
  <path d="M935,40.8 l-3.8,-3.8 h7.6z M946.6,40.8 l-3.8,-3.8 h7.6z" fill="#565b5e"/>
  <g stroke="#8a9094" stroke-width="1.2" fill="#e0f6f6">
    <rect x="930.6" y="27.8" width="11.6" height="5.6" rx="1.8"/>
    <rect x="930.6" y="40.6" width="8.6" height="5.8" rx="1.8"/>
    <rect x="941.4" y="40.6" width="8.4" height="5.8" rx="1.8"/>
  </g>
  <text x="956.2" y="40.8" font-size="14" textLength="73.2" lengthAdjust="spacingAndGlyphs">WipDreased</text>
  <!-- top-left title icon fragment -->
  <path d="M937,3.2 Q941.5,-0.6 945.2,-3 Q949,-0.6 953.4,3.2" fill="none" stroke="#cda873" stroke-width="2.4" stroke-dasharray="2.3 0.8"/>
  <path d="M936.4,8.8 Q940.6,3.4 945.2,1.4 Q949.8,3.4 954,8.8" fill="none" stroke="#0b3a70" stroke-width="2.5" stroke-dasharray="2.2 1"/>
</g>
<g id="rwcontent" clip-path="url(#clipRW)">
  <!-- teal container -->
  <path d="M960.4,40 V523 H1420" fill="none" stroke="#29a6a6" stroke-width="5"/>
  <!-- connector -->
  <path d="M1138,79.4 C1031,79.4 1031,482.6 1130,482.6" fill="none" stroke="#000" stroke-width="3.3"/>
  <path d="M1142.4,482.8 L1128.2,478 V487.6z" fill="#000"/>
  <text x="1020.8" y="263.6" font-size="36.5" textLength="43.4" lengthAdjust="spacingAndGlyphs">No</text>

  <!-- block A (clipped at top) -->
  <rect x="1138" y="20" width="300" height="81.6" rx="7.5" ry="7.5" fill="#ffffff" stroke="#3c3c3c" stroke-width="1.3"/>
  <rect x="1142.5" y="24" width="300" height="73.4" rx="5" ry="5" fill="#e4f8f8" stroke="#a9adad" stroke-width="1"/>
  <path d="M1143,65.4 H1410" stroke="#c5d0d0" stroke-width="1" fill="none"/>
  <use href="#icoAssign" x="1149.4" y="37.2" width="24.6" height="24.6"/>
  <text x="1180.6" y="55.8" font-size="21.6" textLength="236" lengthAdjust="spacingAndGlyphs">Assign Labels:Get buffer c</text>
  <use href="#icoDecide" x="1149.7" y="68.8" width="24" height="24"/>
  <text x="1181.9" y="86.8" font-size="20.6" textLength="230.4" lengthAdjust="spacingAndGlyphs">Decide:  Buffer size shoul</text>

  <!-- block B -->
  <rect x="1138" y="202.9" width="300" height="72.2" rx="7.5" ry="7.5" fill="#ffffff" stroke="#3c3c3c" stroke-width="1.3"/>
  <rect x="1142.5" y="207" width="300" height="63.8" rx="5" ry="5" fill="#e4f8f8" stroke="#a9adad" stroke-width="1"/>
  <path d="M1143,239 H1410" stroke="#c5d0d0" stroke-width="1" fill="none"/>
  <use href="#icoCode" x="1149.7" y="211" width="24" height="24"/>
  <text x="1181.6" y="231.1" font-size="23" textLength="236" lengthAdjust="spacingAndGlyphs">Custom Code: Rewrite</text>
  <use href="#icoDelay" x="1149.7" y="242.8" width="24" height="24"/>
  <text x="1182.2" y="263.2" font-size="25.5" textLength="60.4" lengthAdjust="spacingAndGlyphs">Delay</text>

  <!-- block C -->
  <rect x="1138" y="308.2" width="300" height="136" rx="7.5" ry="7.5" fill="#ffffff" stroke="#3c3c3c" stroke-width="1.3"/>
  <rect x="1142.5" y="312.6" width="300" height="127" rx="5" ry="5" fill="#e4f8f8" stroke="#a9adad" stroke-width="1"/>
  <path d="M1143,344.8 H1410 M1143,376.5 H1410 M1143,408.3 H1410" stroke="#c5d0d0" stroke-width="1" fill="none"/>
  <use href="#icoPush" x="1149.7" y="316.9" width="24" height="24"/>
  <text x="1181.9" y="336.4" font-size="25.4" textLength="232" lengthAdjust="spacingAndGlyphs">Push to List:  Send P</text>
  <use href="#icoDelay" x="1149.7" y="348.6" width="24" height="24"/>
  <text x="1182.2" y="368" font-size="25.5" textLength="60.4" lengthAdjust="spacingAndGlyphs">Delay</text>
  <use href="#icoWait" x="1149.7" y="380.4" width="24" height="24"/>
  <text x="1181.6" y="398.5" font-size="20.2" textLength="225.4" lengthAdjust="spacingAndGlyphs">Wait for Event labels have</text>
  <use href="#icoDelay" x="1149.7" y="412" width="24" height="24"/>
  <text x="1182.2" y="431.8" font-size="25.5" textLength="60.4" lengthAdjust="spacingAndGlyphs">Delay</text>

  <!-- sink -->
  <rect x="1142.6" y="482.6" width="300" height="32.4" rx="6" ry="6" fill="#e4f8f8" stroke="#a0a4a4" stroke-width="1"/>
  <use href="#icoSink" x="1149.7" y="486.8" width="24" height="24"/>
  <text x="1181.5" y="507.2" font-size="25.5" textLength="45.8" lengthAdjust="spacingAndGlyphs">Sink</text>
</g>
<!-- right window scrollbar -->
<g id="rwscroll">
  <rect x="927" y="752" width="483" height="19.5" fill="#f0f0f0"/>
  <rect x="948" y="752" width="462" height="19.5" fill="#cdcdcd"/>
  <path d="M939.6,757.2 L934.4,761.8 L939.6,766.4" fill="none" stroke="#505050" stroke-width="1.9"/>
</g>

</svg>
</body>
</html>
